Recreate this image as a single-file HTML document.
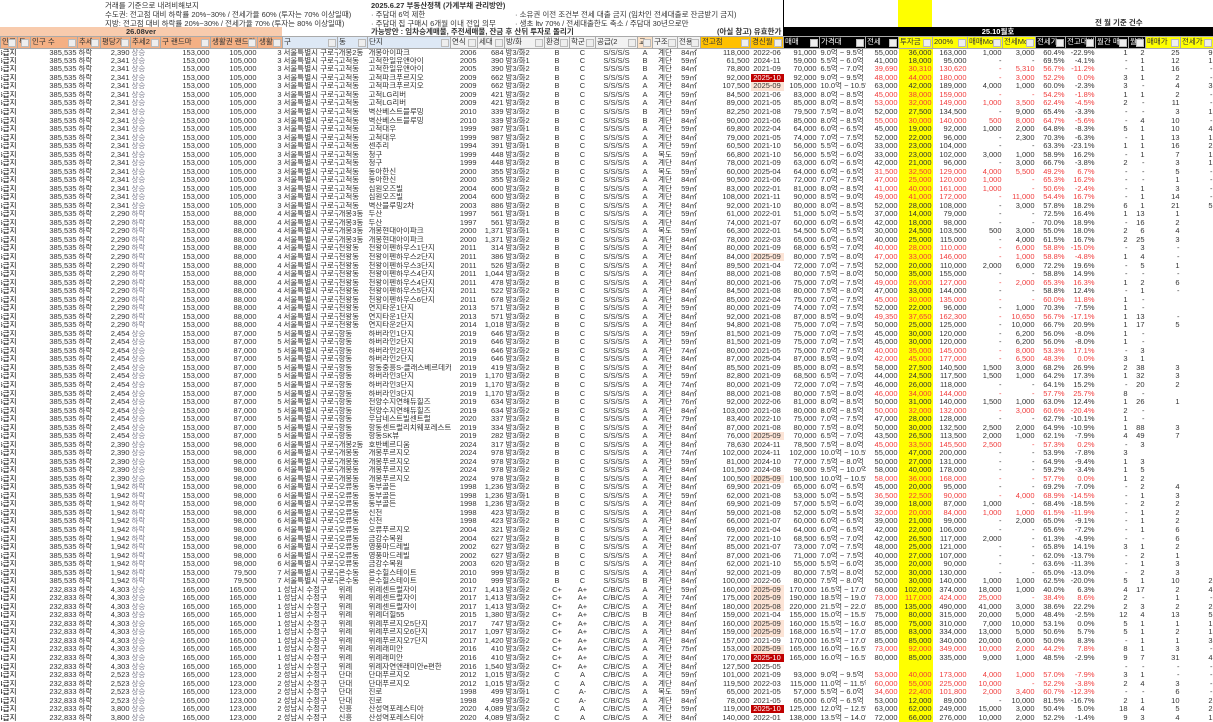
<!DOCTYPE html>
<html><head><meta charset="utf-8"><style>
*{box-sizing:border-box}
body{margin:0;width:1213px;height:714px;overflow:hidden;background:#fff;font-family:"Liberation Sans","Noto Sans CJK KR",sans-serif;font-size:7.5px;color:#333;position:relative}
.a{position:absolute;white-space:nowrap;line-height:9px}
table{position:absolute;top:36px;left:0;width:1213px;table-layout:fixed;border-collapse:collapse}
td,th{padding:0 1px;white-space:nowrap;overflow:hidden;font-weight:normal;font-size:7.5px}
tr{height:8.54px}
td{line-height:8px}
th{height:11.5px;line-height:10px;text-align:left;border:1px solid #aaa;position:relative;padding-right:8px}
th::after{content:"";position:absolute;right:1px;top:2px;width:6px;height:6px;border:1px solid #bbb;background:#eee}
th.o{background:#f4b084}th.b{background:#dde8f5}th.w{background:#f2f2f2}th.y{background:#ffc000}th.k{background:#000;color:#fff}th.yy{background:#ffff00}
td:nth-child(1){text-indent:-3px;color:#000}
td:nth-child(3),td:nth-child(5),td:nth-child(7),td:nth-child(8),td:nth-child(9),td:nth-child(13),td:nth-child(14),td:nth-child(22),td:nth-child(24),td:nth-child(26),td:nth-child(27),td:nth-child(28),td:nth-child(29),td:nth-child(30),td:nth-child(31),td:nth-child(32),td:nth-child(33),td:nth-child(34),td:nth-child(35),td:nth-child(36){text-align:right}
td:nth-child(16),td:nth-child(17),td:nth-child(18),td:nth-child(19),td:nth-child(20),td:nth-child(21),td:nth-child(23){text-align:center}
td:nth-child(6){color:#778}
td:nth-child(27){background:#ffff00}
td:nth-child(24){padding-right:3px}
tr.r td:nth-child(n+26):nth-child(-n+32){color:#f03c3c}
tr.r td:nth-child(27){color:#e03000}
td.x{background:#c00000;color:#fff}
td.p{background:#fce4d6}
</style></head><body>
<div class="a" style="left:105px;top:1px">거래를 기준으로 내려비해보지</div>
<div class="a" style="left:105px;top:10px">수도권: 전고점 대비 하락률 20%~30% / 전세가율 60% (투자는 70% 이상일때)</div>
<div class="a" style="left:105px;top:19px">지방: 전고점 대비 하락률 20%~30% / 전세가율 70% (투자는 80% 이상일때)</div>
<div class="a" style="left:371px;top:1px;font-weight:bold">2025.6.27 부동산정책 (가계부채 관리방안)</div>
<div class="a" style="left:371px;top:10px">· 주담대 6억 제한</div>
<div class="a" style="left:371px;top:19px">· 주담대 집 구매시 6개월 이내 전입 의무</div>
<div class="a" style="left:515px;top:10px">· 소유권 이전 조건부 전세 대출 금지 (임차인 전세대출로 잔금받기 금지)</div>
<div class="a" style="left:515px;top:19px">· 생초 ltv 70% / 전세대출한도 축소 / 주담대 30년으로만</div>
<div style="position:absolute;left:0;top:27px;width:282px;height:9px;background:#f8cbad;text-align:center;font-weight:bold;line-height:9px">26.08ver</div>
<div class="a" style="left:371px;top:27px;font-weight:bold">가능방안 : 임차승계매물, 주전세매물, 잔금 후 산뒤 투자로 돌리기</div>
<div class="a" style="left:717px;top:27px;font-weight:bold">(아실 참고) 유효한가</div>
<div style="position:absolute;left:898px;top:0;width:34px;height:36px;background:#ffff00"></div>
<div style="position:absolute;left:783px;top:0;width:1px;height:27px;background:#000"></div>
<div style="position:absolute;left:783px;top:27px;width:430px;height:9px;background:#000;color:#fff;text-align:center;font-weight:bold;line-height:9px">25.10월호</div>
<div class="a" style="left:1095px;top:18px;font-weight:bold">전 월 기준 건수</div>
<table>
<colgroup><col style="width:17px"><col style="width:13px"><col style="width:47px"><col style="width:23px"><col style="width:30px"><col style="width:30px"><col style="width:50px"><col style="width:47px"><col style="width:25px"><col style="width:55px"><col style="width:30px"><col style="width:83px"><col style="width:27px"><col style="width:27px"><col style="width:40px"><col style="width:25px"><col style="width:26px"><col style="width:42px"><col style="width:15px"><col style="width:25px"><col style="width:23px"><col style="width:50px"><col style="width:33px"><col style="width:36px"><col style="width:46px"><col style="width:33px"><col style="width:34px"><col style="width:35px"><col style="width:35px"><col style="width:33px"><col style="width:30px"><col style="width:30px"><col style="width:33px"><col style="width:17px"><col style="width:35px"><col style="width:33px"></colgroup>
<tr><th class="o">인구<th class="o">특<th class="o">인구 수<th class="o">추세<th class="o">평당가<th class="o">추세2<th class="o">구 랜드마<th class="o">생활권 랜드마<th class="o">생활<th class="b">구<th class="b">동<th class="b">단지<th class="w">연식<th class="w">세대<th class="w">방/화<th class="w">환경<th class="w">학군<th class="w">공급(2<th style="background:#fbe2c8">교<th class="w">구조<th class="w">전용<th class="y">전고점<th class="y">경신월<th class="k">매매<th class="k">가격대<th class="k">전세<th class="yy">투자금<th class="yy">200%<th class="yy">매매Mo<th class="yy">전세Mo<th class="k">전세가<th class="k">전고대비<th class="k">월간 매<th class="k">월간<th class="yy">매매가<th class="yy">전세가
<tr><td>5급지<td><td>385,535<td>하락<td>2,390<td>상승<td>153,000<td>105,000<td>3<td>서울특별시 구로구<td>개봉2동<td>개봉아이파크<td>2006<td>684<td>방3/화2<td>B<td>C<td>S/S/S/S<td>A<td>계단<td>84㎡<td>118,000<td>2022-06<td>91,000<td>9.0억 ~ 9.5억<td>55,000<td>36,000<td>163,000<td>1,000<td>3,000<td>60.4%<td>-22.9%<td>1<td>2<td>25<td>9
<tr><td>5급지<td><td>385,535<td>하락<td>2,341<td>상승<td>153,000<td>105,000<td>3<td>서울특별시 구로구<td>고척동<td>고척한일유앤아이<td>2005<td>390<td>방3/화1<td>B<td>C<td>S/S/S/S<td>B<td>계단<td>59㎡<td>61,500<td>2024-11<td>59,000<td>5.5억 ~ 6.0억<td>41,000<td>18,000<td>95,000<td>-<td>-<td>69.5%<td>-4.1%<td>-<td>1<td>12<td>1
<tr class="r"><td>5급지<td><td>385,535<td>하락<td>2,341<td>상승<td>153,000<td>105,000<td>3<td>서울특별시 구로구<td>고척동<td>고척한일유앤아이<td>2005<td>390<td>방3/화2<td>B<td>C<td>S/S/S/S<td>B<td>계단<td>84㎡<td>78,800<td>2021-09<td>70,000<td>6.5억 ~ 7.0억<td>39,690<td>30,310<td>130,620<td>-<td>5,310<td>56.7%<td>-11.2%<td>-<td>1<td>16<td>-
<tr class="r"><td>5급지<td><td>385,535<td>하락<td>2,341<td>상승<td>153,000<td>105,000<td>3<td>서울특별시 구로구<td>고척동<td>고척파크푸르지오<td>2009<td>662<td>방3/화2<td>B<td>C<td>S/S/S/S<td>A<td>계단<td>59㎡<td>92,000<td class="x">2025-10<td>92,000<td>9.0억 ~ 9.5억<td>48,000<td>44,000<td>180,000<td>-<td>3,000<td>52.2%<td>0.0%<td>3<td>1<td>2<td>-
<tr><td>5급지<td><td>385,535<td>하락<td>2,341<td>상승<td>153,000<td>105,000<td>3<td>서울특별시 구로구<td>고척동<td>고척파크푸르지오<td>2009<td>662<td>방3/화2<td>B<td>C<td>S/S/S/S<td>A<td>계단<td>84㎡<td>107,500<td class="p">2025-09<td>105,000<td>10.0억 ~ 10.5억<td>63,000<td>42,000<td>189,000<td>4,000<td>1,000<td>60.0%<td>-2.3%<td>3<td>-<td>4<td>3
<tr class="r"><td>5급지<td><td>385,535<td>하락<td>2,341<td>상승<td>153,000<td>105,000<td>3<td>서울특별시 구로구<td>고척동<td>고척LG리버<td>2009<td>421<td>방3/화2<td>B<td>C<td>S/S/S/S<td>A<td>계단<td>59㎡<td>84,500<td>2021-06<td>83,000<td>8.0억 ~ 8.5억<td>45,000<td>38,000<td>159,000<td>-<td>-<td>54.2%<td>-1.8%<td>1<td>1<td>2<td>-
<tr class="r"><td>5급지<td><td>385,535<td>하락<td>2,341<td>상승<td>153,000<td>105,000<td>3<td>서울특별시 구로구<td>고척동<td>고척LG리버<td>2009<td>421<td>방3/화2<td>B<td>C<td>S/S/S/S<td>A<td>계단<td>84㎡<td>89,000<td>2021-05<td>85,000<td>8.0억 ~ 8.5억<td>53,000<td>32,000<td>149,000<td>1,000<td>3,500<td>62.4%<td>-4.5%<td>2<td>-<td>11<td>-
<tr><td>5급지<td><td>385,535<td>하락<td>2,341<td>상승<td>153,000<td>105,000<td>3<td>서울특별시 구로구<td>고척동<td>벽산베스트블루밍<td>2010<td>339<td>방3/화2<td>B<td>C<td>S/S/S/S<td>B<td>계단<td>59㎡<td>82,250<td>2021-08<td>79,500<td>7.5억 ~ 8.0억<td>52,000<td>27,500<td>134,500<td>-<td>9,000<td>65.4%<td>-3.3%<td>-<td>-<td>3<td>1
<tr class="r"><td>5급지<td><td>385,535<td>하락<td>2,341<td>상승<td>153,000<td>105,000<td>3<td>서울특별시 구로구<td>고척동<td>벽산베스트블루밍<td>2010<td>339<td>방3/화2<td>B<td>C<td>S/S/S/S<td>B<td>계단<td>84㎡<td>90,000<td>2021-06<td>85,000<td>8.0억 ~ 8.5억<td>55,000<td>30,000<td>140,000<td>500<td>8,000<td>64.7%<td>-5.6%<td>-<td>4<td>10<td>-
<tr><td>5급지<td><td>385,535<td>하락<td>2,341<td>상승<td>153,000<td>105,000<td>3<td>서울특별시 구로구<td>고척동<td>고척대우<td>1999<td>987<td>방3/화1<td>B<td>C<td>S/S/S/S<td>A<td>계단<td>59㎡<td>69,800<td>2022-04<td>64,000<td>6.0억 ~ 6.5억<td>45,000<td>19,000<td>92,000<td>1,000<td>2,000<td>64.8%<td>-8.3%<td>5<td>1<td>10<td>4
<tr><td>5급지<td><td>385,535<td>하락<td>2,341<td>상승<td>153,000<td>105,000<td>3<td>서울특별시 구로구<td>고척동<td>고척대우<td>1999<td>987<td>방3/화2<td>B<td>C<td>S/S/S/S<td>A<td>계단<td>84㎡<td>79,000<td>2021-05<td>74,000<td>7.0억 ~ 7.5억<td>52,000<td>22,000<td>96,000<td>-<td>2,300<td>70.3%<td>-6.3%<td>-<td>1<td>13<td>1
<tr><td>5급지<td><td>385,535<td>하락<td>2,341<td>상승<td>153,000<td>105,000<td>3<td>서울특별시 구로구<td>고척동<td>센추리<td>1994<td>391<td>방3/화1<td>B<td>C<td>S/S/S/S<td>A<td>계단<td>59㎡<td>60,500<td>2021-10<td>56,000<td>5.5억 ~ 6.0억<td>33,000<td>23,000<td>104,000<td>-<td>-<td>63.3%<td>-23.1%<td>1<td>1<td>16<td>2
<tr><td>5급지<td><td>385,535<td>하락<td>2,341<td>상승<td>153,000<td>105,000<td>3<td>서울특별시 구로구<td>고척동<td>청구<td>1999<td>448<td>방3/화2<td>B<td>C<td>S/S/S/S<td>A<td>복도<td>59㎡<td>66,800<td>2021-10<td>56,000<td>5.5억 ~ 6.0억<td>33,000<td>23,000<td>102,000<td>3,000<td>1,000<td>58.9%<td>16.2%<td>-<td>1<td>7<td>1
<tr><td>5급지<td><td>385,535<td>하락<td>2,341<td>상승<td>153,000<td>105,000<td>3<td>서울특별시 구로구<td>고척동<td>청구<td>1999<td>448<td>방3/화2<td>B<td>C<td>S/S/S/S<td>A<td>계단<td>84㎡<td>78,000<td>2021-09<td>63,000<td>6.0억 ~ 6.5억<td>42,000<td>21,000<td>96,000<td>-<td>3,000<td>66.7%<td>-3.8%<td>2<td>-<td>3<td>1
<tr class="r"><td>5급지<td><td>385,535<td>하락<td>2,341<td>상승<td>153,000<td>105,000<td>3<td>서울특별시 구로구<td>고척동<td>동아한신<td>2000<td>355<td>방3/화2<td>B<td>C<td>S/S/S/S<td>A<td>복도<td>59㎡<td>60,000<td>2025-04<td>64,000<td>6.0억 ~ 6.5억<td>31,500<td>32,500<td>129,000<td>4,000<td>5,500<td>49.2%<td>6.7%<td>-<td>-<td>5<td>-
<tr class="r"><td>5급지<td><td>385,535<td>하락<td>2,341<td>상승<td>153,000<td>105,000<td>3<td>서울특별시 구로구<td>고척동<td>동아한신<td>2000<td>355<td>방3/화2<td>B<td>C<td>S/S/S/S<td>A<td>계단<td>84㎡<td>90,500<td>2021-06<td>72,000<td>7.0억 ~ 7.5억<td>47,000<td>25,000<td>120,000<td>1,000<td>-<td>65.3%<td>16.2%<td>-<td>-<td>1<td>-
<tr class="r"><td>5급지<td><td>385,535<td>하락<td>2,341<td>상승<td>153,000<td>105,000<td>3<td>서울특별시 구로구<td>고척동<td>심원오즈빌<td>2004<td>600<td>방3/화2<td>B<td>C<td>S/S/S/S<td>A<td>계단<td>59㎡<td>83,000<td>2022-01<td>81,000<td>8.0억 ~ 8.5억<td>41,000<td>40,000<td>161,000<td>1,000<td>-<td>50.6%<td>-2.4%<td>-<td>1<td>3<td>-
<tr class="r"><td>5급지<td><td>385,535<td>하락<td>2,341<td>상승<td>153,000<td>105,000<td>3<td>서울특별시 구로구<td>고척동<td>심원오즈빌<td>2004<td>600<td>방3/화2<td>B<td>C<td>S/S/S/S<td>A<td>계단<td>84㎡<td>108,000<td>2021-11<td>90,000<td>8.5억 ~ 9.0억<td>49,000<td>41,000<td>172,000<td>-<td>11,000<td>54.4%<td>16.7%<td>-<td>1<td>14<td>-
<tr><td>5급지<td><td>385,535<td>하락<td>2,341<td>상승<td>153,000<td>105,000<td>3<td>서울특별시 구로구<td>고척동<td>벽산블루밍2차<td>2003<td>886<td>방3/화2<td>B<td>C<td>S/S/S/S<td>A<td>계단<td>84㎡<td>92,000<td>2021-10<td>80,000<td>8.0억 ~ 8.5억<td>52,000<td>28,000<td>108,000<td>-<td>3,000<td>57.8%<td>18.2%<td>6<td>1<td>21<td>5
<tr><td>5급지<td><td>385,535<td>하락<td>2,290<td>하락<td>153,000<td>88,000<td>4<td>서울특별시 구로구<td>개봉3동<td>두산<td>1997<td>561<td>방3/화1<td>B<td>C<td>S/S/S/S<td>A<td>계단<td>59㎡<td>61,000<td>2022-01<td>51,000<td>5.0억 ~ 5.5억<td>37,000<td>14,000<td>79,000<td>-<td>-<td>72.5%<td>16.4%<td>1<td>13<td>1
<tr><td>5급지<td><td>385,535<td>하락<td>2,290<td>하락<td>153,000<td>88,000<td>4<td>서울특별시 구로구<td>개봉3동<td>두산<td>1997<td>561<td>방3/화2<td>B<td>C<td>S/S/S/S<td>A<td>계단<td>84㎡<td>74,000<td>2021-07<td>60,000<td>6.0억 ~ 6.5억<td>42,000<td>18,000<td>98,000<td>-<td>-<td>70.0%<td>18.9%<td>-<td>16<td>2
<tr><td>5급지<td><td>385,535<td>하락<td>2,290<td>하락<td>153,000<td>88,000<td>4<td>서울특별시 구로구<td>개봉3동<td>개봉현대아이파크<td>2000<td>1,371<td>방3/화1<td>B<td>C<td>S/S/S/S<td>A<td>복도<td>59㎡<td>66,300<td>2022-01<td>54,500<td>5.0억 ~ 5.5억<td>30,000<td>24,500<td>103,500<td>500<td>3,000<td>55.0%<td>18.0%<td>2<td>6<td>4
<tr><td>5급지<td><td>385,535<td>하락<td>2,290<td>하락<td>153,000<td>88,000<td>4<td>서울특별시 구로구<td>개봉3동<td>개봉현대아이파크<td>2000<td>1,371<td>방3/화2<td>B<td>C<td>S/S/S/S<td>A<td>계단<td>84㎡<td>78,000<td>2022-03<td>65,000<td>6.0억 ~ 6.5억<td>40,000<td>25,000<td>115,000<td>-<td>4,000<td>61.5%<td>16.7%<td>2<td>25<td>3
<tr class="r"><td>5급지<td><td>385,535<td>하락<td>2,290<td>하락<td>153,000<td>88,000<td>4<td>서울특별시 구로구<td>천왕동<td>천왕이펜하우스1단지<td>2011<td>314<td>방3/화2<td>B<td>C<td>S/S/S/S<td>A<td>계단<td>84㎡<td>80,000<td>2021-09<td>68,000<td>6.5억 ~ 7.0억<td>40,000<td>28,000<td>110,000<td>-<td>6,000<td>58.8%<td>-15.0%<td>-<td>3<td>-
<tr class="r"><td>5급지<td><td>385,535<td>하락<td>2,290<td>하락<td>153,000<td>88,000<td>4<td>서울특별시 구로구<td>천왕동<td>천왕이펜하우스2단지<td>2011<td>386<td>방3/화2<td>B<td>C<td>S/S/S/S<td>A<td>계단<td>84㎡<td>84,000<td class="p">2025-09<td>80,000<td>7.5억 ~ 8.0억<td>47,000<td>33,000<td>146,000<td>-<td>1,000<td>58.8%<td>-4.8%<td>1<td>4<td>-
<tr><td>5급지<td><td>385,535<td>하락<td>2,290<td>하락<td>153,000<td>88,000<td>4<td>서울특별시 구로구<td>천왕동<td>천왕이펜하우스3단지<td>2011<td>526<td>방3/화2<td>B<td>C<td>S/S/S/S<td>A<td>계단<td>84㎡<td>89,500<td>2021-04<td>72,000<td>7.0억 ~ 7.5억<td>52,000<td>20,000<td>110,000<td>2,000<td>6,000<td>72.2%<td>19.6%<td>-<td>5<td>1
<tr><td>5급지<td><td>385,535<td>하락<td>2,290<td>하락<td>153,000<td>88,000<td>4<td>서울특별시 구로구<td>천왕동<td>천왕이펜하우스4단지<td>2011<td>1,044<td>방3/화2<td>B<td>C<td>S/S/S/S<td>A<td>계단<td>84㎡<td>88,000<td>2021-08<td>80,000<td>7.5억 ~ 8.0억<td>50,000<td>35,000<td>155,000<td>-<td>-<td>58.8%<td>14.9%<td>-<td>-<td>-
<tr class="r"><td>5급지<td><td>385,535<td>하락<td>2,290<td>하락<td>153,000<td>88,000<td>4<td>서울특별시 구로구<td>천왕동<td>천왕이펜하우스4단지<td>2011<td>478<td>방3/화2<td>B<td>C<td>S/S/S/S<td>A<td>계단<td>84㎡<td>80,000<td>2021-06<td>75,000<td>7.0억 ~ 7.5억<td>49,000<td>26,000<td>127,000<td>-<td>2,000<td>65.3%<td>16.3%<td>1<td>2<td>6
<tr><td>5급지<td><td>385,535<td>하락<td>2,290<td>하락<td>153,000<td>88,000<td>4<td>서울특별시 구로구<td>천왕동<td>천왕이펜하우스5단지<td>2011<td>522<td>방3/화2<td>B<td>C<td>S/S/S/S<td>A<td>계단<td>84㎡<td>84,500<td>2021-08<td>80,000<td>7.5억 ~ 8.0억<td>47,000<td>33,000<td>144,000<td>-<td>-<td>58.8%<td>12.4%<td>-<td>1<td>-
<tr class="r"><td>5급지<td><td>385,535<td>하락<td>2,290<td>하락<td>153,000<td>88,000<td>4<td>서울특별시 구로구<td>천왕동<td>천왕이펜하우스6단지<td>2011<td>678<td>방3/화2<td>B<td>C<td>S/S/S/S<td>A<td>계단<td>84㎡<td>85,000<td>2022-04<td>75,000<td>7.0억 ~ 7.5억<td>45,000<td>30,000<td>135,000<td>-<td>-<td>60.0%<td>11.8%<td>1<td>-
<tr><td>5급지<td><td>385,535<td>하락<td>2,290<td>하락<td>153,000<td>88,000<td>4<td>서울특별시 구로구<td>천왕동<td>연지타운1단지<td>2013<td>571<td>방3/화2<td>B<td>C<td>S/S/S/S<td>A<td>계단<td>59㎡<td>80,000<td>2021-09<td>74,000<td>7.0억 ~ 7.5억<td>52,000<td>22,000<td>96,000<td>-<td>1,000<td>70.3%<td>-7.5%<td>1<td>-
<tr class="r"><td>5급지<td><td>385,535<td>하락<td>2,290<td>하락<td>153,000<td>88,000<td>4<td>서울특별시 구로구<td>천왕동<td>연지타운1단지<td>2013<td>571<td>방3/화2<td>B<td>C<td>S/S/S/S<td>A<td>계단<td>84㎡<td>92,000<td>2021-08<td>87,000<td>8.5억 ~ 9.0억<td>49,350<td>37,650<td>162,300<td>-<td>10,650<td>56.7%<td>-17.1%<td>1<td>13<td>-
<tr><td>5급지<td><td>385,535<td>하락<td>2,290<td>하락<td>153,000<td>88,000<td>4<td>서울특별시 구로구<td>천왕동<td>연지타운2단지<td>2014<td>1,018<td>방3/화2<td>B<td>C<td>S/S/S/S<td>A<td>계단<td>84㎡<td>94,800<td>2021-08<td>75,000<td>7.0억 ~ 7.5억<td>50,000<td>25,000<td>125,000<td>-<td>10,000<td>66.7%<td>20.9%<td>1<td>17<td>5
<tr><td>5급지<td><td>385,535<td>하락<td>2,454<td>상승<td>153,000<td>87,000<td>5<td>서울특별시 구로구<td>항동<td>하버라인1단지<td>2019<td>646<td>방3/화2<td>B<td>C<td>S/S/S/S<td>A<td>계단<td>59㎡<td>81,500<td>2021-09<td>75,000<td>7.0억 ~ 7.5억<td>45,000<td>30,000<td>120,000<td>-<td>6,200<td>56.0%<td>-8.0%<td>1<td>-
<tr><td>5급지<td><td>385,535<td>하락<td>2,454<td>상승<td>153,000<td>87,000<td>5<td>서울특별시 구로구<td>항동<td>하버라인2단지<td>2019<td>646<td>방3/화2<td>B<td>C<td>S/S/S/S<td>A<td>계단<td>59㎡<td>81,500<td>2021-09<td>75,000<td>7.0억 ~ 7.5억<td>45,000<td>30,000<td>120,000<td>-<td>6,200<td>56.0%<td>-8.0%<td>1<td>-
<tr class="r"><td>5급지<td><td>385,535<td>하락<td>2,454<td>상승<td>153,000<td>87,000<td>5<td>서울특별시 구로구<td>항동<td>하버라인2단지<td>2019<td>646<td>방3/화2<td>B<td>C<td>S/S/S/S<td>A<td>계단<td>74㎡<td>80,000<td>2021-05<td>75,000<td>7.0억 ~ 7.5억<td>40,000<td>35,000<td>145,000<td>-<td>8,000<td>53.3%<td>17.1%<td>-<td>3
<tr class="r"><td>5급지<td><td>385,535<td>하락<td>2,454<td>상승<td>153,000<td>87,000<td>5<td>서울특별시 구로구<td>항동<td>하버라인2단지<td>2019<td>646<td>방3/화2<td>B<td>C<td>S/S/S/S<td>A<td>계단<td>84㎡<td>87,000<td>2025-04<td>87,000<td>8.5억 ~ 9.0억<td>42,000<td>45,000<td>177,000<td>-<td>6,500<td>48.3%<td>0.0%<td>3<td>1
<tr><td>5급지<td><td>385,535<td>하락<td>2,454<td>상승<td>153,000<td>87,000<td>5<td>서울특별시 구로구<td>항동<td>항동중흥S-클래스베르데카운<td>2019<td>419<td>방3/화2<td>B<td>C<td>S/S/S/S<td>A<td>계단<td>84㎡<td>85,500<td>2021-09<td>85,000<td>8.0억 ~ 8.5억<td>58,000<td>27,500<td>140,500<td>1,500<td>3,000<td>68.2%<td>26.9%<td>2<td>38<td>3
<tr><td>5급지<td><td>385,535<td>하락<td>2,454<td>상승<td>153,000<td>87,000<td>5<td>서울특별시 구로구<td>항동<td>하버라인3단지<td>2019<td>1,170<td>방3/화2<td>B<td>C<td>S/S/S/S<td>A<td>계단<td>59㎡<td>82,800<td>2021-09<td>68,500<td>6.5억 ~ 7.0억<td>44,000<td>24,500<td>117,500<td>1,500<td>1,000<td>64.2%<td>17.3%<td>1<td>32<td>3
<tr><td>5급지<td><td>385,535<td>하락<td>2,454<td>상승<td>153,000<td>87,000<td>5<td>서울특별시 구로구<td>항동<td>하버라인3단지<td>2019<td>1,170<td>방3/화2<td>B<td>C<td>S/S/S/S<td>A<td>계단<td>74㎡<td>80,000<td>2021-09<td>72,000<td>7.0억 ~ 7.5억<td>46,000<td>26,000<td>118,000<td>-<td>-<td>64.1%<td>15.2%<td>-<td>20<td>2
<tr class="r"><td>5급지<td><td>385,535<td>하락<td>2,454<td>상승<td>153,000<td>87,000<td>5<td>서울특별시 구로구<td>항동<td>하버라인3단지<td>2019<td>1,170<td>방3/화2<td>B<td>C<td>S/S/S/S<td>A<td>계단<td>84㎡<td>88,000<td>2021-08<td>80,000<td>7.5억 ~ 8.0억<td>46,000<td>34,000<td>144,000<td>-<td>-<td>57.7%<td>25.7%<td>8<td>-
<tr><td>5급지<td><td>385,535<td>하락<td>2,454<td>상승<td>153,000<td>87,000<td>5<td>서울특별시 구로구<td>항동<td>천양수지연해듀힐즈<td>2019<td>634<td>방3/화2<td>B<td>C<td>S/S/S/S<td>A<td>계단<td>76㎡<td>92,000<td>2022-06<td>81,000<td>8.0억 ~ 8.5억<td>50,000<td>31,000<td>140,000<td>1,500<td>1,000<td>63.0%<td>12.4%<td>1<td>26<td>1
<tr class="r"><td>5급지<td><td>385,535<td>하락<td>2,454<td>상승<td>153,000<td>87,000<td>5<td>서울특별시 구로구<td>항동<td>천양수지연해듀힐즈<td>2019<td>634<td>방3/화2<td>B<td>C<td>S/S/S/S<td>A<td>계단<td>84㎡<td>103,000<td>2021-08<td>80,000<td>8.0억 ~ 8.5억<td>50,000<td>32,000<td>132,000<td>-<td>3,000<td>60.6%<td>-20.4%<td>2<td>-
<tr><td>5급지<td><td>385,535<td>하락<td>2,454<td>상승<td>153,000<td>87,000<td>5<td>서울특별시 구로구<td>항동<td>우남네스트빌센트럴<td>2020<td>337<td>방3/화2<td>B<td>C<td>S/S/S/S<td>A<td>계단<td>79㎡<td>83,400<td>2022-10<td>75,000<td>7.0억 ~ 7.5억<td>47,000<td>28,000<td>128,000<td>-<td>-<td>62.7%<td>-10.1%<td>1<td>-
<tr><td>5급지<td><td>385,535<td>하락<td>2,454<td>상승<td>153,000<td>87,000<td>5<td>서울특별시 구로구<td>항동<td>항동센트럴리치웨포레스트<td>2019<td>334<td>방3/화2<td>B<td>C<td>S/S/S/S<td>A<td>계단<td>84㎡<td>87,000<td>2021-08<td>80,000<td>7.5억 ~ 8.0억<td>50,000<td>30,000<td>132,500<td>2,500<td>2,000<td>64.9%<td>-10.9%<td>1<td>88<td>3
<tr><td>5급지<td><td>385,535<td>하락<td>2,454<td>상승<td>153,000<td>87,000<td>5<td>서울특별시 구로구<td>항동<td>항동SK뷰<td>2019<td>282<td>방3/화2<td>B<td>C<td>S/S/S/S<td>A<td>계단<td>84㎡<td>76,000<td class="p">2025-09<td>70,000<td>6.5억 ~ 7.0억<td>43,500<td>26,500<td>113,500<td>2,000<td>1,000<td>62.1%<td>-7.9%<td>4<td>49<td>7
<tr class="r"><td>5급지<td><td>385,535<td>하락<td>2,390<td>상승<td>153,000<td>98,000<td>6<td>서울특별시 구로구<td>개봉2동<td>호반베르디움<td>2024<td>317<td>방3/화2<td>B<td>C<td>S/S/S/S<td>A<td>계단<td>84㎡<td>78,630<td>2024-11<td>78,500<td>7.5억 ~ 8.0억<td>45,000<td>33,500<td>145,500<td>2,500<td>-<td>57.3%<td>0.2%<td>-<td>3
<tr><td>5급지<td><td>385,535<td>하락<td>2,390<td>상승<td>153,000<td>98,000<td>6<td>서울특별시 구로구<td>개봉동<td>개봉푸르지오<td>2024<td>978<td>방3/화2<td>B<td>C<td>S/S/S/S<td>A<td>계단<td>74㎡<td>102,000<td>2024-11<td>102,000<td>10.0억 ~ 10.5억<td>55,000<td>47,000<td>200,000<td>-<td>-<td>53.9%<td>-7.8%<td>3
<tr><td>5급지<td><td>385,535<td>하락<td>2,390<td>상승<td>153,000<td>98,000<td>6<td>서울특별시 구로구<td>개봉동<td>개봉푸르지오<td>2024<td>978<td>방3/화2<td>B<td>C<td>S/S/S/S<td>A<td>계단<td>59㎡<td>81,000<td>2024-10<td>77,000<td>7.5억 ~ 8.0억<td>50,000<td>27,000<td>131,000<td>-<td>-<td>64.9%<td>-9.4%<td>1<td>3
<tr><td>5급지<td><td>385,535<td>하락<td>2,390<td>상승<td>153,000<td>98,000<td>6<td>서울특별시 구로구<td>개봉동<td>개봉푸르지오<td>2024<td>978<td>방3/화2<td>B<td>C<td>S/S/S/S<td>A<td>계단<td>84㎡<td>101,500<td>2024-08<td>98,000<td>9.5억 ~ 10.0억<td>58,000<td>40,000<td>178,000<td>-<td>-<td>59.2%<td>-3.4%<td>1<td>5
<tr class="r"><td>5급지<td><td>385,535<td>하락<td>2,390<td>상승<td>153,000<td>98,000<td>6<td>서울특별시 구로구<td>개봉동<td>개봉푸르지오<td>2024<td>978<td>방3/화2<td>B<td>C<td>S/S/S/S<td>A<td>계단<td>84㎡<td>100,500<td class="p">2025-09<td>100,500<td>10.0억 ~ 10.5억<td>58,000<td>36,000<td>168,000<td>-<td>-<td>57.7%<td>0.0%<td>1<td>2
<tr><td>5급지<td><td>385,535<td>하락<td>1,942<td>하락<td>153,000<td>98,000<td>6<td>서울특별시 구로구<td>오류동<td>동부골든<td>1998<td>1,236<td>방3/화2<td>B<td>C<td>S/S/S/S<td>A<td>계단<td>84㎡<td>69,900<td>2021-09<td>65,000<td>6.0억 ~ 6.5억<td>45,000<td>20,000<td>95,000<td>-<td>-<td>69.2%<td>-7.0%<td>-<td>2<td>4
<tr class="r"><td>5급지<td><td>385,535<td>하락<td>1,942<td>하락<td>153,000<td>98,000<td>6<td>서울특별시 구로구<td>오류동<td>동부골든<td>1998<td>1,236<td>방3/화1<td>B<td>C<td>S/S/S/S<td>A<td>계단<td>59㎡<td>62,000<td>2021-08<td>53,000<td>5.0억 ~ 5.5억<td>36,500<td>22,500<td>90,000<td>-<td>4,000<td>68.9%<td>-14.5%<td>-<td>1<td>3
<tr><td>5급지<td><td>385,535<td>하락<td>1,942<td>하락<td>153,000<td>98,000<td>6<td>서울특별시 구로구<td>오류동<td>동부골든<td>1998<td>1,236<td>방3/화2<td>B<td>C<td>S/S/S/S<td>A<td>계단<td>84㎡<td>69,900<td>2021-09<td>57,000<td>5.5억 ~ 6.0억<td>39,000<td>18,000<td>87,000<td>1,000<td>-<td>68.4%<td>-18.5%<td>-<td>2<td>2
<tr class="r"><td>5급지<td><td>385,535<td>하락<td>1,942<td>하락<td>153,000<td>98,000<td>6<td>서울특별시 구로구<td>오류동<td>신천<td>1998<td>423<td>방3/화2<td>B<td>C<td>S/S/S/S<td>A<td>계단<td>84㎡<td>59,000<td>2021-08<td>52,000<td>5.0억 ~ 5.5억<td>32,000<td>20,000<td>84,000<td>1,000<td>1,000<td>61.5%<td>-11.9%<td>-<td>1<td>2
<tr><td>5급지<td><td>385,535<td>하락<td>1,942<td>하락<td>153,000<td>98,000<td>6<td>서울특별시 구로구<td>오류동<td>신천<td>1998<td>423<td>방3/화2<td>B<td>C<td>S/S/S/S<td>A<td>계단<td>84㎡<td>66,000<td>2021-07<td>60,000<td>6.0억 ~ 6.5억<td>39,000<td>21,000<td>99,000<td>-<td>2,000<td>65.0%<td>-9.1%<td>-<td>1<td>2
<tr><td>5급지<td><td>385,535<td>하락<td>1,942<td>하락<td>153,000<td>98,000<td>6<td>서울특별시 구로구<td>오류동<td>오류푸르지오<td>2004<td>321<td>방3/화2<td>B<td>C<td>S/S/S/S<td>A<td>계단<td>84㎡<td>69,000<td>2021-04<td>64,000<td>6.0억 ~ 6.5억<td>42,000<td>22,000<td>106,000<td>-<td>-<td>65.6%<td>-7.2%<td>-<td>1<td>6
<tr><td>5급지<td><td>385,535<td>하락<td>1,942<td>하락<td>153,000<td>98,000<td>6<td>서울특별시 구로구<td>오류동<td>금강수목원<td>2004<td>627<td>방3/화2<td>B<td>C<td>S/S/S/S<td>A<td>계단<td>84㎡<td>72,000<td>2021-10<td>68,500<td>6.5억 ~ 7.0억<td>42,000<td>26,500<td>117,000<td>2,000<td>-<td>61.3%<td>-4.9%<td>-<td>-<td>6
<tr><td>5급지<td><td>385,535<td>하락<td>1,942<td>하락<td>153,000<td>98,000<td>6<td>서울특별시 구로구<td>오류동<td>영풍마드레빌<td>2002<td>627<td>방3/화2<td>B<td>C<td>S/S/S/S<td>A<td>계단<td>84㎡<td>85,000<td>2021-07<td>73,000<td>7.0억 ~ 7.5억<td>48,000<td>25,000<td>121,000<td>-<td>-<td>65.8%<td>14.1%<td>3<td>1<td>2
<tr><td>5급지<td><td>385,535<td>하락<td>1,942<td>하락<td>153,000<td>98,000<td>6<td>서울특별시 구로구<td>오류동<td>영풍마드레빌<td>2002<td>627<td>방3/화2<td>B<td>C<td>S/S/S/S<td>A<td>계단<td>84㎡<td>87,000<td>2021-06<td>71,000<td>7.0억 ~ 7.5억<td>40,000<td>27,000<td>107,000<td>-<td>-<td>62.0%<td>-13.7%<td>-<td>2<td>1
<tr><td>5급지<td><td>385,535<td>하락<td>1,942<td>하락<td>153,000<td>98,000<td>6<td>서울특별시 구로구<td>오류동<td>금강수목원<td>2003<td>620<td>방3/화2<td>B<td>C<td>S/S/S/S<td>A<td>계단<td>84㎡<td>62,000<td>2021-10<td>55,000<td>5.5억 ~ 6.0억<td>35,000<td>20,000<td>90,000<td>-<td>-<td>63.6%<td>-11.3%<td>-<td>1<td>3
<tr><td>5급지<td><td>385,535<td>하락<td>1,942<td>하락<td>153,000<td>79,500<td>7<td>서울특별시 구로구<td>온수동<td>온수힐스테이트<td>2010<td>999<td>방3/화2<td>B<td>C<td>S/S/S/S<td>A<td>계단<td>84㎡<td>92,000<td>2021-09<td>80,000<td>7.5억 ~ 8.0억<td>52,000<td>30,000<td>130,000<td>-<td>-<td>65.0%<td>-13.0%<td>-<td>2<td>3
<tr><td>5급지<td><td>385,535<td>하락<td>1,942<td>하락<td>153,000<td>79,500<td>7<td>서울특별시 구로구<td>온수동<td>온수힐스테이트<td>2010<td>999<td>방3/화2<td>B<td>C<td>S/S/S/S<td>B<td>계단<td>84㎡<td>100,000<td>2022-06<td>80,000<td>7.5억 ~ 8.0억<td>50,000<td>30,000<td>140,000<td>1,000<td>1,000<td>62.5%<td>-20.0%<td>5<td>1<td>10<td>2
<tr><td>4급지<td><td>232,833<td>하락<td>4,303<td>상승<td>165,000<td>165,000<td>1<td>성남시 수정구<td>위례<td>위례센트럴자이<td>2017<td>1,413<td>방3/화2<td>C+<td>A+<td>C/B/C/S<td>A<td>계단<td>59㎡<td>160,000<td class="p">2025-09<td>170,000<td>16.5억 ~ 17.0억<td>68,000<td>102,000<td>374,000<td>18,000<td>1,000<td>40.0%<td>6.3%<td>4<td>17<td>2<td>4
<tr class="r"><td>4급지<td><td>232,833<td>하락<td>4,303<td>상승<td>165,000<td>165,000<td>1<td>성남시 수정구<td>위례<td>위례센트럴자이<td>2017<td>1,413<td>방3/화2<td>C+<td>A+<td>C/B/C/S<td>A<td>계단<td>74㎡<td>175,000<td class="p">2025-09<td>190,000<td>18.5억 ~ 19.0억<td>73,000<td>117,000<td>424,000<td>25,000<td>-<td>38.4%<td>8.6%<td>2<td>-<td>1<td>-
<tr><td>4급지<td><td>232,833<td>하락<td>4,303<td>상승<td>165,000<td>165,000<td>1<td>성남시 수정구<td>위례<td>위례센트럴자이<td>2017<td>1,413<td>방3/화2<td>C+<td>A+<td>C/B/C/S<td>A<td>계단<td>84㎡<td>180,000<td class="p">2025-08<td>220,000<td>21.5억 ~ 22.0억<td>85,000<td>135,000<td>490,000<td>41,000<td>3,000<td>38.6%<td>22.2%<td>2<td>3<td>2<td>2
<tr><td>4급지<td><td>232,833<td>하락<td>4,303<td>상승<td>165,000<td>165,000<td>1<td>성남시 수정구<td>위례<td>위례더힐55<td>2015<td>1,380<td>방3/화2<td>C+<td>A+<td>C/B/C/S<td>B<td>계단<td>84㎡<td>159,000<td>2021-04<td>155,000<td>15.0억 ~ 15.5억<td>75,000<td>80,000<td>315,000<td>20,000<td>5,000<td>48.4%<td>-2.5%<td>12<td>4<td>13<td>5
<tr><td>4급지<td><td>232,833<td>하락<td>4,303<td>상승<td>165,000<td>165,000<td>1<td>성남시 수정구<td>위례<td>위례푸르지오5단지<td>2017<td>747<td>방3/화2<td>C+<td>A+<td>C/B/C/S<td>A<td>계단<td>84㎡<td>160,000<td class="p">2025-09<td>160,000<td>15.5억 ~ 16.0억<td>85,000<td>75,000<td>310,000<td>7,000<td>10,000<td>53.1%<td>0.0%<td>5<td>1<td>1<td>1
<tr><td>4급지<td><td>232,833<td>하락<td>4,303<td>상승<td>165,000<td>165,000<td>1<td>성남시 수정구<td>위례<td>위례푸르지오6단지<td>2017<td>1,097<td>방3/화2<td>C+<td>A+<td>C/B/C/S<td>A<td>계단<td>84㎡<td>159,000<td class="p">2025-09<td>168,000<td>16.5억 ~ 17.0억<td>85,000<td>83,000<td>334,000<td>13,000<td>5,000<td>50.6%<td>5.7%<td>5<td>1<td>2<td>1
<tr><td>4급지<td><td>232,833<td>하락<td>4,303<td>상승<td>165,000<td>165,000<td>1<td>성남시 수정구<td>위례<td>위례푸르지오7단지<td>2017<td>1,420<td>방3/화2<td>C+<td>A+<td>C/B/C/S<td>A<td>계단<td>84㎡<td>157,000<td>2021-09<td>170,000<td>16.5억 ~ 17.0억<td>85,000<td>85,000<td>340,000<td>20,000<td>6,000<td>50.0%<td>8.3%<td>-<td>1<td>1<td>3
<tr class="r"><td>4급지<td><td>232,833<td>하락<td>4,303<td>상승<td>165,000<td>165,000<td>1<td>성남시 수정구<td>위례<td>위례래미안<td>2016<td>410<td>방3/화2<td>C+<td>A+<td>C/B/C/S<td>A<td>계단<td>75㎡<td>153,000<td class="p">2025-09<td>165,000<td>16.0억 ~ 16.5억<td>73,000<td>92,000<td>349,000<td>10,000<td>2,000<td>44.2%<td>7.8%<td>8<td>1<td>3<td>-
<tr><td>4급지<td><td>232,833<td>하락<td>4,303<td>상승<td>165,000<td>165,000<td>1<td>성남시 수정구<td>위례<td>위례래미안<td>2016<td>410<td>방3/화2<td>C+<td>A+<td>C/B/C/S<td>A<td>계단<td>84㎡<td>170,000<td class="x">2025-10<td>165,000<td>16.0억 ~ 16.5억<td>80,000<td>85,000<td>335,000<td>9,000<td>1,000<td>48.5%<td>-2.9%<td>9<td>7<td>31<td>4
<tr><td>4급지<td><td>232,833<td>하락<td>4,303<td>상승<td>165,000<td>165,000<td>1<td>성남시 수정구<td>위례<td>위례자연앤래미안e편한<td>2016<td>1,540<td>방3/화2<td>C+<td>A+<td>C/B/C/S<td>A<td>계단<td>84㎡<td>127,500<td>2025-05<td><td><td><td><td><td><td><td><td><td>-<td>-<td>-<td>-
<tr class="r"><td>4급지<td><td>232,833<td>하락<td>2,523<td>상승<td>165,000<td>123,000<td>2<td>성남시 수정구<td>단대<td>단대푸르지오<td>2012<td>1,015<td>방3/화2<td>C<td>A<td>C/B/C/S<td>A<td>계단<td>59㎡<td>101,000<td>2021-09<td>93,000<td>9.0억 ~ 9.5억<td>53,000<td>40,000<td>173,000<td>4,000<td>1,000<td>57.0%<td>-7.9%<td>3<td>1<td>-<td>-
<tr class="r"><td>4급지<td><td>232,833<td>하락<td>2,523<td>상승<td>165,000<td>123,000<td>2<td>성남시 수정구<td>단대<td>단대푸르지오<td>2012<td>1,015<td>방3/화2<td>C<td>A<td>C/B/C/S<td>A<td>계단<td>84㎡<td>119,500<td>2022-03<td>115,000<td>11.0억 ~ 11.5억<td>60,000<td>55,000<td>225,000<td>10,000<td>-<td>52.2%<td>-3.8%<td>2<td>4<td>3<td>-
<tr class="r"><td>4급지<td><td>232,833<td>하락<td>2,523<td>상승<td>165,000<td>123,000<td>2<td>성남시 수정구<td>단대<td>진로<td>1998<td>499<td>방3/화1<td>C<td>A-<td>C/B/C/S<td>A<td>복도<td>59㎡<td>65,000<td>2021-05<td>57,000<td>5.5억 ~ 6.0억<td>34,600<td>22,400<td>101,800<td>2,000<td>3,400<td>60.7%<td>-12.3%<td>-<td>-<td>6<td>-
<tr><td>4급지<td><td>232,833<td>하락<td>2,523<td>상승<td>165,000<td>123,000<td>2<td>성남시 수정구<td>단대<td>진로<td>1998<td>499<td>방3/화2<td>C<td>A-<td>C/B/C/S<td>A<td>계단<td>84㎡<td>78,000<td>2021-05<td>65,000<td>6.0억 ~ 6.5억<td>53,000<td>12,000<td>89,000<td>-<td>10,000<td>81.5%<td>-16.7%<td>2<td>1<td>10<td>2
<tr><td>4급지<td><td>232,833<td>하락<td>3,800<td>상승<td>165,000<td>123,000<td>2<td>성남시 수정구<td>신흥<td>산성역포레스티아<td>2020<td>4,089<td>방3/화2<td>C<td>A<td>C/B/C/S<td>A<td>계단<td>59㎡<td>119,000<td class="x">2025-10<td>125,000<td>12.0억 ~ 12.5억<td>63,000<td>62,000<td>249,000<td>15,000<td>3,000<td>50.4%<td>5.0%<td>18<td>4<td>5<td>2
<tr><td>4급지<td><td>232,833<td>하락<td>3,800<td>상승<td>165,000<td>123,000<td>2<td>성남시 수정구<td>신흥<td>산성역포레스티아<td>2020<td>4,089<td>방3/화2<td>C<td>A<td>C/B/C/S<td>A<td>계단<td>84㎡<td>140,000<td>2022-01<td>138,000<td>13.5억 ~ 14.0억<td>72,000<td>66,000<td>276,000<td>10,000<td>2,000<td>52.2%<td>-1.4%<td>9<td>3<td>4<td>1
</table>
</body></html>
